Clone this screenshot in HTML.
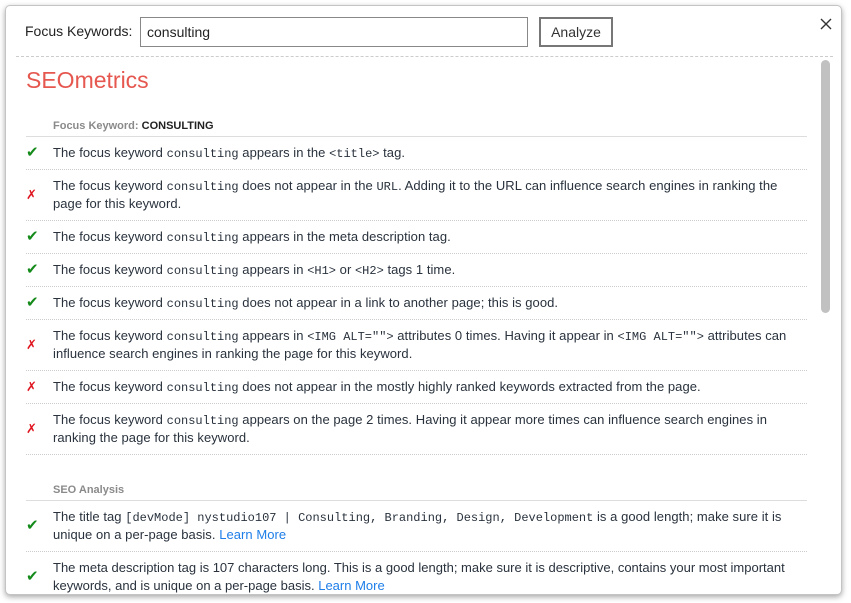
<!DOCTYPE html>
<html><head><style>
*{box-sizing:border-box;margin:0;padding:0}
body{width:851px;height:603px;background:#fff;font-family:"Liberation Sans",Helvetica,Arial,sans-serif;color:#29323d;position:relative;overflow:hidden}
.modal{position:absolute;left:5px;top:5px;width:837px;height:590px;background:#fff;border:1px solid #c4c4c4;border-radius:5px;box-shadow:0 2px 6px rgba(0,0,0,.35);overflow:hidden}
.lbl{position:absolute;left:19px;top:17px;font-size:14px;color:#222}
.inp{position:absolute;left:134px;top:11px;width:388px;height:30px;border:1px solid #888;font-size:14px;padding:6px 6px;color:#222}
.btn{position:absolute;left:533px;top:11px;width:74px;height:30px;border:2px solid #777;font-size:14px;color:#333;text-align:center;line-height:26px}
.close{position:absolute;left:814px;top:12px}
.dash{position:absolute;left:10px;top:50px;width:817px;border-top:1px dashed #ccc}
.scroll{position:absolute;left:10px;top:51px;width:817px;height:538px;overflow:hidden}
.sb{position:absolute;left:815px;top:54px;width:9px;height:253px;background:#c1c1c1;border-radius:5px}
h1{position:absolute;left:10px;top:10px;font-size:23px;font-weight:normal;color:#e5574f}
.sec{position:absolute;left:10px;width:781px}
.hd{font-size:11px;font-weight:bold;color:#8a8a8a;padding-left:27px;height:17px;border-bottom:1px solid #ddd}
.hd b{color:#222}
.row{position:relative;font-size:13px;line-height:18px;padding:7px 16px 7px 27px;border-bottom:1px dotted #ccc;color:#29323d;letter-spacing:0.05px}
.row .i{position:absolute;left:0;top:50%;margin-top:-10px;font-size:15px;line-height:20px}
.ok{color:#148a1a}.no{color:#e0141e;font-size:13px!important}
code{font-family:"Liberation Mono",monospace;font-size:12px;line-height:0;letter-spacing:0}
a{color:#1e7ee8;text-decoration:none}
</style></head><body>
<div class="modal">
<div class="lbl">Focus Keywords:</div>
<div class="inp">consulting</div>
<div class="btn">Analyze</div>
<svg class="close" width="12" height="12" viewBox="0 0 12 12"><path d="M1 1L11 11M11 1L1 11" stroke="#333" stroke-width="1.4"/></svg>
<div class="dash"></div>
<div class="scroll">
<h1>SEOmetrics</h1>
<div class="sec" style="top:63px">
<div class="hd">Focus Keyword: <b>CONSULTING</b></div>
<div class="row"><span class="i ok">✔</span>The focus keyword <code>consulting</code> appears in the <code>&lt;title&gt;</code> tag.</div>
<div class="row"><span class="i no">✗</span>The focus keyword <code>consulting</code> does not appear in the <code>URL</code>. Adding it to the URL can influence search engines in ranking the page for this keyword.</div>
<div class="row"><span class="i ok">✔</span>The focus keyword <code>consulting</code> appears in the meta description tag.</div>
<div class="row"><span class="i ok">✔</span>The focus keyword <code>consulting</code> appears in <code>&lt;H1&gt;</code> or <code>&lt;H2&gt;</code> tags 1 time.</div>
<div class="row"><span class="i ok">✔</span>The focus keyword <code>consulting</code> does not appear in a link to another page; this is good.</div>
<div class="row"><span class="i no">✗</span>The focus keyword <code>consulting</code> appears in <code>&lt;IMG ALT=""&gt;</code> attributes 0 times. Having it appear in <code>&lt;IMG ALT=""&gt;</code> attributes can influence search engines in ranking the page for this keyword.</div>
<div class="row"><span class="i no">✗</span>The focus keyword <code>consulting</code> does not appear in the mostly highly ranked keywords extracted from the page.</div>
<div class="row"><span class="i no">✗</span>The focus keyword <code>consulting</code> appears on the page 2 times. Having it appear more times can influence search engines in ranking the page for this keyword.</div>
</div>
<div class="sec" style="top:427px">
<div class="hd">SEO Analysis</div>
<div class="row"><span class="i ok">✔</span>The title tag <code>[devMode] nystudio107 | Consulting, Branding, Design, Development</code> is a good length; make sure it is unique on a per-page basis. <a>Learn More</a></div>
<div class="row" style="padding-right:0;letter-spacing:0"><span class="i ok">✔</span>The meta description tag is 107 characters long. This is a good length; make sure it is descriptive, contains your most important keywords, and is unique on a per-page basis. <a>Learn More</a></div>
</div>
</div>
<div class="sb"></div>
</div>
</body></html>
